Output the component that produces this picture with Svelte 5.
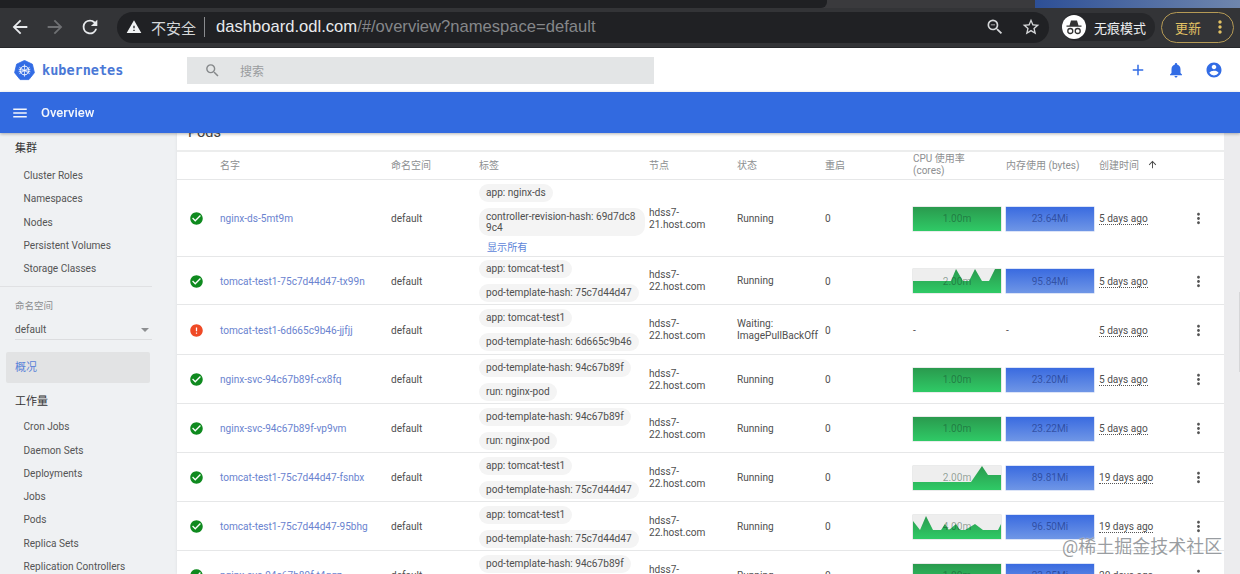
<script>
  const icons = {
    back: 'M20 11H7.83l5.59-5.59L12 4l-8 8 8 8 1.41-1.41L7.83 13H20v-2z',
    forward: 'M12 4l-1.41 1.41L16.17 11H4v2h12.17l-5.58 5.59L12 20l8-8z',
    reload: 'M17.65 6.35A7.96 7.96 0 0 0 12 4a8 8 0 1 0 7.73 10h-2.08A6 6 0 1 1 12 6c1.66 0 3.14.69 4.22 1.78L13 11h7V4l-2.35 2.35z',
    warning: 'M1 21h22L12 2 1 21zm12-3h-2v-2h2v2zm0-4h-2v-4h2v4z',
    zoom: 'M15.5 14h-.79l-.28-.27A6.47 6.47 0 0 0 16 9.5 6.5 6.5 0 1 0 9.5 16c1.61 0 3.09-.59 4.23-1.57l.27.28v.79l5 4.99L20.49 19l-4.99-5zm-6 0C7.01 14 5 11.99 5 9.5S7.01 5 9.5 5 14 7.01 14 9.5 11.99 14 9.5 14zM7 9h5v1H7z',
    star: 'M22 9.24l-7.19-.62L12 2 9.19 8.63 2 9.24l5.46 4.73L5.82 21 12 17.27 18.18 21l-1.63-7.03L22 9.24zM12 15.4l-3.76 2.27 1-4.28-3.32-2.88 4.38-.38L12 6.1l1.71 4.04 4.38.38-3.32 2.88 1 4.28L12 15.4z',
    search: 'M15.5 14h-.79l-.28-.27A6.47 6.47 0 0 0 16 9.5 6.5 6.5 0 1 0 9.5 16c1.61 0 3.09-.59 4.23-1.57l.27.28v.79l5 4.99L20.49 19l-4.99-5zm-6 0C7.01 14 5 11.99 5 9.5S7.01 5 9.5 5 14 7.01 14 9.5 11.99 14 9.5 14z',
    add: 'M19 13h-6v6h-2v-6H5v-2h6V5h2v6h6v2z',
    bell: 'M12 22c1.1 0 2-.9 2-2h-4c0 1.1.9 2 2 2zm6-6v-5c0-3.07-1.63-5.64-4.5-6.32V4c0-.83-.67-1.5-1.5-1.5s-1.5.67-1.5 1.5v.68C7.64 5.36 6 7.92 6 11v5l-2 2v1h16v-1l-2-2z',
    account: 'M12 2C6.48 2 2 6.48 2 12s4.48 10 10 10 10-4.48 10-10S17.52 2 12 2zm0 3c1.66 0 3 1.34 3 3s-1.34 3-3 3-3-1.34-3-3 1.34-3 3-3zm0 14.2a7.2 7.2 0 0 1-6-3.22c.03-1.99 4-3.08 6-3.08 1.99 0 5.97 1.09 6 3.08a7.2 7.2 0 0 1-6 3.22z',
    menu: 'M3 18h18v-2H3v2zm0-5h18v-2H3v2zm0-7v2h18V6H3z',
    ok: 'M12 2C6.48 2 2 6.48 2 12s4.48 10 10 10 10-4.48 10-10S17.52 2 12 2zm-2 15l-5-5 1.41-1.41L10 14.17l7.59-7.59L19 8l-9 9z',
    error: 'M12 2C6.48 2 2 6.48 2 12s4.48 10 10 10 10-4.48 10-10S17.52 2 12 2zm1 15h-2v-2h2v2zm0-4h-2V7h2v6z',
    more: 'M12 8c1.1 0 2-.9 2-2s-.9-2-2-2-2 .9-2 2 .9 2 2 2zm0 2c-1.1 0-2 .9-2 2s.9 2 2 2 2-.9 2-2-.9-2-2-2zm0 6c-1.1 0-2 .9-2 2s.9 2 2 2 2-.9 2-2-.9-2-2-2z',
    up: 'M4 12l1.41 1.41L11 7.83V20h2V7.83l5.58 5.59L20 12l-8-8-8 8z'
  };

  const cluster = ['Cluster Roles', 'Namespaces', 'Nodes', 'Persistent Volumes', 'Storage Classes'];
  const workloads = ['Cron Jobs', 'Daemon Sets', 'Deployments', 'Jobs', 'Pods', 'Replica Sets', 'Replication Controllers'];

  // cpu line is the top edge of the sparkline, in a 88x24 box
  const flat = '0,0 88,0';
  const pods = [
    { name: 'nginx-ds-5mt9m', labels: ['app: nginx-ds', 'controller-revision-hash: 69d7dc89c4'], more: true, node: 'hdss7-21.host.com', status: 'Running', cpu: '1.00m', line: flat, mem: '23.64Mi', age: '5 days ago', h: 77 },
    { name: 'tomcat-test1-75c7d44d47-tx99n', labels: ['app: tomcat-test1', 'pod-template-hash: 75c7d44d47'], node: 'hdss7-22.host.com', status: 'Running', cpu: '2.00m', line: '0,12 38,12 43,0 50,12 56,12 62,0 69,12 76,12 82,0 88,0', mem: '95.84Mi', age: '5 days ago', h: 48 },
    { name: 'tomcat-test1-6d665c9b46-jjfjj', bad: true, labels: ['app: tomcat-test1', 'pod-template-hash: 6d665c9b46'], node: 'hdss7-22.host.com', status: 'Waiting: ImagePullBackOff', age: '5 days ago', h: 50 },
    { name: 'nginx-svc-94c67b89f-cx8fq', labels: ['pod-template-hash: 94c67b89f', 'run: nginx-pod'], node: 'hdss7-22.host.com', status: 'Running', cpu: '1.00m', line: flat, mem: '23.20Mi', age: '5 days ago', h: 49 },
    { name: 'nginx-svc-94c67b89f-vp9vm', labels: ['pod-template-hash: 94c67b89f', 'run: nginx-pod'], node: 'hdss7-22.host.com', status: 'Running', cpu: '1.00m', line: flat, mem: '23.22Mi', age: '5 days ago', h: 49 },
    { name: 'tomcat-test1-75c7d44d47-fsnbx', labels: ['app: tomcat-test1', 'pod-template-hash: 75c7d44d47'], node: 'hdss7-22.host.com', status: 'Running', cpu: '2.00m', line: '0,16 58,16 69,0 75,9 88,9', mem: '89.81Mi', age: '19 days ago', h: 49 },
    { name: 'tomcat-test1-75c7d44d47-95bhg', labels: ['app: tomcat-test1', 'pod-template-hash: 75c7d44d47'], node: 'hdss7-22.host.com', status: 'Running', cpu: '4.00m', line: '0,6 7,15 13,1 20,15 28,15 32,9 36,15 43,9 47,15 52,15 62,9 70,15 85,15 88,9', mem: '96.50Mi', age: '19 days ago', h: 49 },
    { name: 'nginx-svc-94c67b89f-t4qgz', labels: ['pod-template-hash: 94c67b89f', 'run: nginx-pod'], node: 'hdss7-22.host.com', status: 'Running', cpu: '1.00m', line: flat, mem: '23.25Mi', age: '20 days ago', h: 49 }
  ];
</script>

{#snippet icon(d, cls)}
  <svg class={cls} viewBox="0 0 24 24"><path {d} /></svg>
{/snippet}

<div class="page">
  <div class="tabs">
    <div class="tab-dark"></div>
    <div class="tab-rest"></div>
    <div class="tab-wall"></div>
  </div>
  <div class="toolbar">
    {@render icon(icons.back, 'tb-ic')}
    {@render icon(icons.forward, 'tb-ic dim')}
    {@render icon(icons.reload, 'tb-ic')}
    <div class="omnibox">
      {@render icon(icons.warning, 'warn')}
      <span class="insecure">不安全</span>
      <span class="bar"></span>
      <span class="url"><b>dashboard.odl.com</b>/#/overview?namespace=default</span>
      <span class="grow"></span>
      <div class="omni-actions">
        {@render icon(icons.zoom, 'omni-ic')}
        {@render icon(icons.star, 'omni-ic')}
      </div>
    </div>
    <div class="incognito">
      <svg class="hat" viewBox="0 0 24 24">
        <circle cx="12" cy="12" r="12" fill="#fff" />
        <path d="M7.500 10.500l1.500-5h6l1.500 5h3v1.300h-15v-1.300z" fill="#333" />
        <circle cx="8.300" cy="16" r="2.500" fill="none" stroke="#333" stroke-width="1.300" />
        <circle cx="15.700" cy="16" r="2.500" fill="none" stroke="#333" stroke-width="1.300" />
      </svg>
      <span>无痕模式</span>
    </div>
    <div class="update">
      <span>更新</span>
      {@render icon(icons.more, 'upd-more')}
    </div>
  </div>

  <header class="appbar">
    <div class="brand">
      <svg class="logo" viewBox="0 0 24 24">
        <polygon points="12,0.500 21,4.800 23.300,14.500 17,22.400 7,22.400 0.700,14.500 3,4.800" fill="#326ce5" stroke="#326ce5" stroke-linejoin="round" />
        <g stroke="#fff" fill="none" stroke-width="1.100">
          <circle cx="12" cy="12" r="5" />
          <path d="M12 5v14M6 8.200l12 7.600M18 8.200L6 15.800M5.300 13.500l13.400-3M18.700 13.500l-13.400-3" stroke-width=".8" />
        </g>
      </svg>
      <span class="wordmark">kubernetes</span>
    </div>
    <div class="searchbox">
      {@render icon(icons.search, 'search-ic')}
      <span>搜索</span>
    </div>
    <span class="grow"></span>
    <div class="actions">
      {@render icon(icons.add, 'act')}
      {@render icon(icons.bell, 'act')}
      {@render icon(icons.account, 'act')}
    </div>
  </header>

  <div class="titlebar">
    {@render icon(icons.menu, 'menu-ic')}
    <span>Overview</span>
  </div>

  <div class="body">
    <nav class="sidebar">
      <div class="nav-head first">集群</div>
      {#each cluster as item}
        <div class="nav-item">{item}</div>
      {/each}
      <div class="divider"></div>
      <div class="ns-label">命名空间</div>
      <div class="ns-select"><span>default</span><i class="caret"></i></div>
      <div class="nav-active">概况</div>
      <div class="nav-head">工作量</div>
      {#each workloads as item}
        <div class="nav-item">{item}</div>
      {/each}
    </nav>

    <main class="content">
      <div class="card">
        <h2>Pods</h2>
        <div class="row head">
          <div></div>
          <div>名字</div>
          <div>命名空间</div>
          <div>标签</div>
          <div>节点</div>
          <div>状态</div>
          <div>重启</div>
          <div class="tight">CPU 使用率<br />(cores)</div>
          <div>内存使用 (bytes)</div>
          <div class="sorted">创建时间 {@render icon(icons.up, 'sort-ic')}</div>
          <div></div>
        </div>
        {#each pods as pod}
          <div class="row" style="height:{pod.h}px">
            <div class="state">{@render icon(pod.bad ? icons.error : icons.ok, pod.bad ? 'st bad' : 'st good')}</div>
            <div class="link">{pod.name}</div>
            <div>default</div>
            <div class="labels">
              {#each pod.labels as label}
                <span class="chip">{label}</span>
              {/each}
              {#if pod.more}<span class="show-all">显示所有</span>{/if}
            </div>
            <div class="tight node">{pod.node}</div>
            <div class="tight">{pod.status}</div>
            <div>0</div>
            <div>
              {#if pod.cpu}
                <div class="spark">
                  <svg viewBox="0 0 88 24" preserveAspectRatio="none">
                    <defs>
                      <linearGradient id="g-fill" x1="0" y1="0" x2="0" y2="1">
                        <stop offset="0" stop-color="#2a9a4e" />
                        <stop offset="1" stop-color="#2fca66" />
                      </linearGradient>
                    </defs>
                    <polygon points="0,24 {pod.line} 88,24" fill="url(#g-fill)" />
                  </svg>
                  <span>{pod.cpu}</span>
                </div>
              {:else}-{/if}
            </div>
            <div>
              {#if pod.mem}
                <div class="spark mem"><span>{pod.mem}</span></div>
              {:else}-{/if}
            </div>
            <div><span class="age">{pod.age}</span></div>
            <div class="more">{@render icon(icons.more, 'more-ic')}</div>
          </div>
        {/each}
      </div>
      <div class="gutter"><div class="thumb"></div></div>
    </main>
  </div>

  <div class="watermark">@稀土掘金技术社区</div>
</div>

<style>
  :global(body) {
    margin: 0;
    overflow: hidden;
    background: #fff;
  }
  svg {
    display: block;
    fill: currentColor;
    flex: none;
  }
  .page {
    position: relative;
    width: 1240px;
    height: 574px;
    overflow: hidden;
    display: flex;
    flex-direction: column;
    font-family: Roboto, "Noto Sans CJK SC", sans-serif;
    font-size: 10.1px;
    color: #4f4f4f;
    filter: blur(0.45px);
  }
  .grow {
    flex: 1;
  }

  /* browser chrome */
  .tabs {
    height: 8px;
    display: flex;
    background: #3a3a3d;
  }
  .tab-dark {
    width: 827px;
    background: #1f2023;
    border-radius: 0 0 6px 0;
  }
  .tab-rest {
    width: 208px;
  }
  .tab-wall {
    flex: 1;
    background: linear-gradient(90deg, #2d4f96, #6f86ad);
  }
  .toolbar {
    height: 40px;
    box-sizing: border-box;
    display: flex;
    align-items: center;
    background: #333437;
    border-bottom: 1px solid #26272a;
    padding: 0 4px 1px 9px;
    color: #e8eaed;
  }
  .tb-ic {
    width: 22px;
    height: 22px;
    margin-right: 13px;
  }
  .tb-ic.dim {
    color: #6f7073;
  }
  .omnibox {
    width: 932px;
    margin-left: 3px;
    height: 31px;
    background: #202124;
    border-radius: 16px;
    display: flex;
    align-items: center;
    padding: 0 8px 0 9px;
    box-sizing: border-box;
    font-family: "Liberation Sans", "Noto Sans CJK SC", sans-serif;
    font-size: 16.6px;
    color: #85878a;
  }
  .warn {
    width: 16px;
    height: 16px;
    color: #f1f3f4;
    margin-right: 9px;
  }
  .insecure {
    color: #d5d7d9;
    font-size: 15px;
  }
  .bar {
    width: 1px;
    height: 20px;
    background: #8a8c8f;
    margin: 0 11px 0 8px;
  }
  .url b {
    font-weight: normal;
    color: #e8eaed;
  }
  .omni-actions {
    display: flex;
    gap: 16px;
  }
  .omni-ic {
    width: 20px;
    height: 20px;
    color: #d5d7d9;
  }
  .incognito {
    display: flex;
    align-items: center;
    gap: 8px;
    height: 28px;
    padding-right: 9px;
    margin-left: 13px;
    background: #26272a;
    border-radius: 14px;
    font-size: 13px;
    color: #eceef0;
  }
  .hat {
    width: 24px;
    height: 24px;
  }
  .update {
    display: flex;
    align-items: center;
    justify-content: space-between;
    box-sizing: border-box;
    width: 73px;
    height: 31px;
    margin-left: 6px;
    padding: 0 3px 0 13px;
    border: 1px solid #b59a55;
    border-radius: 16px;
    color: #e3c264;
    font-size: 13px;
  }
  .upd-more {
    width: 20px;
    height: 20px;
  }

  /* app bars */
  .appbar {
    height: 44px;
    display: flex;
    align-items: center;
    background: #fff;
    flex: none;
  }
  .brand {
    display: flex;
    align-items: center;
    width: 187px;
    padding-left: 14px;
    box-sizing: border-box;
    gap: 7px;
  }
  .logo {
    width: 21px;
    height: 21px;
  }
  .wordmark {
    font-family: "DejaVu Sans Mono", monospace;
    font-weight: bold;
    font-size: 13.5px;
    color: #4a78d6;
  }
  .searchbox {
    width: 467px;
    height: 27px;
    display: flex;
    align-items: center;
    background: #e3e5e6;
    padding-left: 17px;
    box-sizing: border-box;
    color: #9a9c9e;
    font-size: 12px;
  }
  .search-ic {
    width: 17px;
    height: 17px;
    color: #85888a;
    margin-right: 19px;
  }
  .actions {
    display: flex;
    gap: 20px;
    padding-right: 17px;
    color: #326ce5;
  }
  .act {
    width: 18px;
    height: 18px;
  }
  .titlebar {
    height: 41px;
    flex: none;
    display: flex;
    align-items: center;
    gap: 12px;
    padding-left: 11px;
    background: #326ae0;
    color: #f3f6fc;
    font-weight: 500;
    font-size: 13px;
    box-shadow: 0 1px 3px rgba(0, 0, 0, 0.3);
    position: relative;
    z-index: 1;
  }
  .menu-ic {
    width: 18px;
    height: 18px;
  }

  /* sidebar */
  .body {
    flex: 1;
    min-height: 0;
    display: flex;
    background: #eff1f3;
  }
  .sidebar {
    width: 177px;
    flex: none;
    box-sizing: border-box;
    padding-right: 25px;
    color: #555;
  }
  .nav-head {
    padding-left: 15px;
    color: #333;
    font-size: 11px;
    line-height: 17px;
    margin: 10px 0 5px;
  }
  .nav-head.first {
    margin-top: 7px;
    margin-bottom: 7px;
  }
  .nav-item {
    padding-left: 23.5px;
    height: 23.25px;
    line-height: 23.25px;
  }
  .divider {
    height: 1px;
    background: #e0e1e3;
    margin-top: 6px;
  }
  .ns-label {
    padding-left: 15px;
    margin-top: 12px;
    font-size: 9.5px;
    line-height: 14px;
    color: #8b8d8f;
  }
  .ns-select {
    margin: 7px 0 0 15px;
    height: 19px;
    padding-right: 2px;
    display: flex;
    justify-content: space-between;
    align-items: center;
    border-bottom: 1px solid #dcdddf;
  }
  .caret {
    border: 4px solid transparent;
    border-top-color: #8d8f91;
    border-bottom: 0;
    margin-right: 1px;
  }
  .nav-active {
    margin: 12px 2px 0 6px;
    height: 31px;
    line-height: 31px;
    padding-left: 9px;
    background: #e2e3e4;
    color: #5b82d8;
    font-size: 11px;
    border-radius: 2px;
  }

  /* table */
  .content {
    flex: 1;
    min-width: 0;
    display: flex;
  }
  .card {
    flex: 1;
    background: #fff;
    overflow: hidden;
    box-shadow: 0 0 3px rgba(0, 0, 0, 0.08);
  }
  .gutter {
    width: 16px;
    background: #ececee;
    flex: none;
    position: relative;
  }
  .thumb {
    position: absolute;
    right: 0;
    top: 159px;
    width: 1.5px;
    height: 80px;
    background: #d6d6d8;
  }
  h2 {
    margin: -10px 0 0;
    padding-left: 11px;
    height: 27px;
    font-size: 14.5px;
    line-height: 20px;
    font-weight: 400;
    color: #444;
  }
  .row {
    display: grid;
    grid-template-columns: 43px 171px 88px 170px 88px 88px 88px 93px 93px 91px 1fr;
    align-items: center;
    border-bottom: 1px solid #e6e7e8;
    box-sizing: border-box;
    padding-top: 1px;
  }
  .row.head {
    height: 30px;
    border-top: 2px solid #eceded;
    padding: 0 0 2px;
    color: #8d8f91;
    font-size: 10px;
  }
  .tight {
    line-height: 12px;
    padding-right: 4px;
  }
  .node {
    width: 62px;
    padding: 0;
  }
  .sorted {
    display: flex;
    align-items: center;
    gap: 8px;
  }
  .sort-ic {
    width: 11px;
    height: 11px;
    color: #444;
  }
  .state {
    padding-left: 12px;
  }
  .st {
    width: 15px;
    height: 15px;
    background: radial-gradient(#fff 45%, transparent 46%);
  }
  .good {
    color: #0f8a1f;
  }
  .bad {
    color: #ef4a26;
  }
  .link {
    color: #6a83cf;
  }
  .labels {
    display: flex;
    flex-direction: column;
    align-items: flex-start;
    gap: 6px;
    width: 166px;
  }
  .chip {
    background: #f4f4f4;
    border-radius: 10px;
    padding: 3px 7px;
    line-height: 11px;
    min-height: 12px;
    word-break: break-all;
  }
  .show-all {
    color: #5d84d8;
    padding-left: 8px;
    line-height: 12px;
  }
  .spark {
    position: relative;
    width: 88px;
    height: 24px;
    background: #eee;
    box-shadow: 0 0 0 0.5px #d5d8d8;
    display: flex;
    align-items: center;
    justify-content: center;
  }
  .spark svg {
    position: absolute;
    inset: 0;
    width: 100%;
    height: 100%;
  }
  .spark span {
    position: relative;
    color: rgba(20, 60, 40, 0.45);
  }
  .spark.mem {
    background: linear-gradient(#3a6be0, #6f96e6);
    box-shadow: 0 0 0 0.5px #b9c9ee;
  }
  .spark.mem span {
    color: rgba(20, 40, 110, 0.55);
  }
  .age {
    border-bottom: 1px dotted #555;
  }
  .more {
    display: flex;
    justify-content: flex-end;
    padding-right: 17px;
  }
  .more-ic {
    width: 17px;
    height: 17px;
    color: #555;
  }
  .watermark {
    position: absolute;
    left: 1062px;
    top: 536px;
    font-size: 18px;
    line-height: 22px;
    color: rgba(120, 125, 130, 0.75);
    text-shadow: 0 0 1px #fff;
  }
</style>
